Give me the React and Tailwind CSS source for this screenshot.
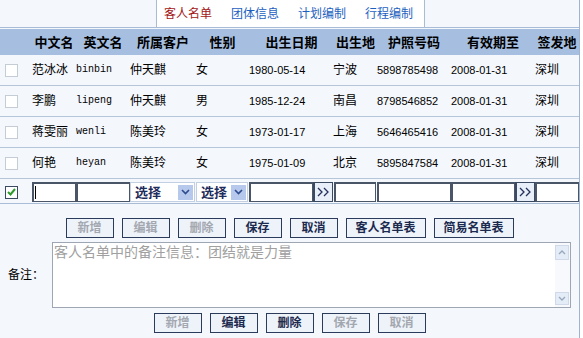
import React from "react";

const COLS = "grid grid-cols-[32px_44px_54px_66px_53px_85px_43px_74px_84px_44px]";

const rows = [
  ["范冰冰", "binbin", "仲天麒", "女", "1980-05-14", "宁波", "5898785498", "2008-01-31", "深圳"],
  ["李鹏", "lipeng", "仲天麒", "男", "1985-12-24", "南昌", "8798546852", "2008-01-31", "深圳"],
  ["蒋雯丽", "wenli", "陈美玲", "女", "1973-01-17", "上海", "5646465416", "2008-01-31", "深圳"],
  ["何艳", "heyan", "陈美玲", "女", "1975-01-09", "北京", "5895847584", "2008-01-31", "深圳"],
];

const headers = ["中文名", "英文名", "所属客户", "性别", "出生日期", "出生地", "护照号码", "有效期至", "签发地"];

function Btn({ label, wide, disabled }) {
  return (
    <div
      className={
        "h-[20px] border border-[#2b3b5c] bg-[#eef3fa] flex items-center justify-center text-[12px] leading-none font-bold " +
        (wide ? "w-[80px] " : "w-[48px] ") +
        (disabled ? "text-[#a3a8b0]" : "text-[#1b2a4e]")
      }
    >
      {label}
    </div>
  );
}

function Input({ w }) {
  return (
    <div
      className={
        "h-[20px] bg-white border-t-2 border-l-2 border-r border-b border-[#4a5568] " + w
      }
    />
  );
}

function Select({ w }) {
  return (
    <div className={"h-[20px] bg-white border border-[#c3d0e3] flex items-center justify-between pl-[4px] pr-[1px] " + w}>
      <span className="text-[13px] font-bold text-[#1f2d5c] leading-none">选择</span>
      <span className="w-[15px] h-[15px] bg-[#b6c9ec] flex items-center justify-center">
        <svg width="9" height="6" viewBox="0 0 9 6">
          <polyline points="1,1 4.5,4.5 8,1" fill="none" stroke="#2c4a8c" strokeWidth="1.6" />
        </svg>
      </span>
    </div>
  );
}

function More() {
  return (
    <div className="w-[20px] h-[20px] bg-[#e9eff8] border border-l-2 border-[#3b4a63] flex items-center justify-center">
      <svg width="13" height="10" viewBox="0 0 13 10">
        <polyline points="1,1 5,5 1,9" fill="none" stroke="#23325a" strokeWidth="1.3" />
        <polyline points="7,1 11,5 7,9" fill="none" stroke="#23325a" strokeWidth="1.3" />
      </svg>
    </div>
  );
}

export default function App() {
  return (
    <div className="w-[583px] h-[338px] bg-white overflow-hidden font-['Liberation_Sans','Noto_Sans_CJK_SC',sans-serif] text-black">
      <div className="w-[580px] h-[338px] bg-[#f4f7fc] border-r border-[#9fb4d3] flex flex-col">
        {/* tab bar */}
        <div className="h-[28px] border-b border-[#a9bcd6] flex">
          <div className="ml-[156px] w-[269px] h-full bg-white border-l border-r border-[#a9bcd6] flex items-center pl-[7px] gap-[19px] text-[12px] leading-none">
            <span className="text-[#a31515]">客人名单</span>
            <span className="text-[#1d5fc0]">团体信息</span>
            <span className="text-[#1d5fc0]">计划编制</span>
            <span className="text-[#1d5fc0]">行程编制</span>
          </div>
        </div>

        {/* header */}
        <div className={COLS + " mt-px h-[26px] bg-[#a6bfe0] items-center text-[13px] font-bold leading-none"}>
          <div />
          {headers.map((h) => (
            <div key={h} className="text-center whitespace-nowrap">
              {h}
            </div>
          ))}
        </div>

        {/* rows */}
        {rows.map((r, i) => (
          <div key={i} className={COLS + " h-[31px] border-b border-[#b5c5da] items-center text-[12px] leading-none"}>
            <div className="pl-[5px]">
              <div className="w-[13px] h-[13px] bg-white border border-[#c4ccd6]" />
            </div>
            <div>{r[0]}</div>
            <div className="font-['Liberation_Mono',monospace] text-[10px]">{r[1]}</div>
            <div>{r[2]}</div>
            <div>{r[3]}</div>
            <div className="text-[11px]">{r[4]}</div>
            <div className="-ml-px">{r[5]}</div>
            <div className="text-[11px]">{r[6]}</div>
            <div className="text-[11px]">{r[7]}</div>
            <div>{r[8]}</div>
          </div>
        ))}

        {/* input row */}
        <div className={COLS + " h-[25px] pt-[2px] border-b border-[#a9bcd6] items-center"}>
          <div className="pl-[5px]">
            <div className="w-[13px] h-[13px] bg-white border border-[#3b4a63] flex items-center justify-center">
              <svg width="9" height="8" viewBox="0 0 9 8">
                <polyline points="1,4 3.5,6.5 8,1" fill="none" stroke="#2e9a2e" strokeWidth="2" />
              </svg>
            </div>
          </div>
          <div className="relative">
            <Input w="w-[44px]" />
            <span className="absolute left-[3px] top-[4px] w-px h-[13px] bg-black" />
          </div>
          <Input w="w-[54px]" />
          <Select w="w-[65px]" />
          <Select w="w-[52px]" />
          <div className="flex">
            <Input w="w-[64px]" />
            <More />
          </div>
          <Input w="w-[42px]" />
          <Input w="w-[74px]" />
          <div className="flex">
            <Input w="w-[64px]" />
            <More />
          </div>
          <Input w="w-[44px]" />
        </div>

        {/* top buttons */}
        <div className="mt-[14px] flex justify-center gap-[8px]">
          <Btn label="新增" disabled />
          <Btn label="编辑" disabled />
          <Btn label="删除" disabled />
          <Btn label="保存" />
          <Btn label="取消" />
          <Btn label="客人名单表" wide />
          <Btn label="简易名单表" wide />
        </div>

        {/* remark */}
        <div className="mt-[4px] flex items-center">
          <div className="w-[52px] pl-[8px] text-[12px] leading-none">备注：</div>
          <div className="w-[519px] h-[66px] bg-white border border-[#9da6b2] flex">
            <textarea
              readOnly
              value="客人名单中的备注信息：团结就是力量"
              className="flex-1 h-full resize-none overflow-hidden outline-none bg-white text-[14px] leading-[16px] text-[#a0a0a0] px-[1px] pt-[1px]"
            />
            <div className="w-[15px] h-full bg-[#f7f9fc] flex flex-col justify-between pr-px py-[2px]">
              <div className="w-[14px] h-[15px] bg-[#e4ecf7] border border-[#cfd9e8] flex items-center justify-center">
                <svg width="8" height="5" viewBox="0 0 8 5">
                  <polyline points="1,4 4,1 7,4" fill="none" stroke="#9aa8bc" strokeWidth="1.4" />
                </svg>
              </div>
              <div className="w-[14px] h-[13px] bg-[#e4ecf7] border border-[#cfd9e8] flex items-center justify-center">
                <svg width="8" height="5" viewBox="0 0 8 5">
                  <polyline points="1,1 4,4 7,1" fill="none" stroke="#9aa8bc" strokeWidth="1.4" />
                </svg>
              </div>
            </div>
          </div>
        </div>

        {/* bottom buttons */}
        <div className="mt-[5px] flex justify-center gap-[8px]">
          <Btn label="新增" disabled />
          <Btn label="编辑" />
          <Btn label="删除" />
          <Btn label="保存" disabled />
          <Btn label="取消" disabled />
        </div>
      </div>
    </div>
  );
}
